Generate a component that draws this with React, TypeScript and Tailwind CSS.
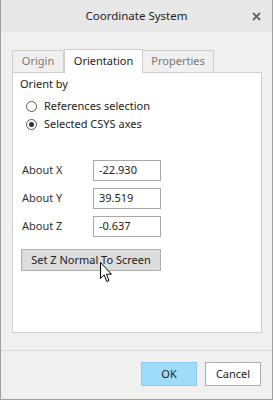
import React from 'react';

const font = { fontFamily: '"Noto Sans", "Open Sans", Arial, sans-serif' };

function Radio({ checked, label }: { checked?: boolean; label: string }) {
  return (
    <div className="flex items-center h-[18px]">
      <span className="ml-[6px] w-[11px] h-[11px] rounded-full border border-[#5a5a5a] bg-white flex items-center justify-center">
        {checked && <span className="w-[5px] h-[5px] rounded-full bg-[#333]" />}
      </span>
      <span className="ml-[7px] text-[11px] text-[#222]">{label}</span>
    </div>
  );
}

function AxisRow({ label, value }: { label: string; value: string }) {
  return (
    <div className="flex items-center h-[21px]">
      <span className="w-[71px] text-[11px] text-[#333]">{label}</span>
      <div className="w-[68px] h-[21px] border border-[#a8a8a8] bg-white px-[5px] flex items-center text-[11px] text-[#222]">
        {value}
      </div>
    </div>
  );
}

export default function App() {
  return (
    <div
      style={font}
      className="relative w-[273px] h-[400px] bg-[#f0f0f0] border-x border-b border-[#a0a0a0] flex flex-col overflow-hidden"
    >
      <div className="h-[32px] shrink-0 bg-[#e8e8e8] flex items-center justify-center relative">
        <span className="text-[11.5px] text-[#222]">Coordinate System</span>
        <svg className="absolute right-[11px] top-[12px]" width="9" height="9" viewBox="0 0 9 9">
          <path d="M1 1 L8 8 M8 1 L1 8" stroke="#666" strokeWidth="1.8" />
        </svg>
      </div>

      <div className="pl-[11px] pt-[17px] w-[261px]">
        <div className="flex h-[23px] items-end text-[11px]">
          <div className="h-[22px] w-[52px] border border-b-0 border-[#cfcfcf] bg-[#f0f0f0] flex items-center justify-center text-[#777]">
            Origin
          </div>
          <div className="h-[24px] w-[79px] -mb-px z-10 border border-b-0 border-[#cfcfcf] bg-white flex items-center justify-center text-[#222]">
            Orientation
          </div>
          <div className="h-[22px] w-[71px] border border-b-0 border-l-0 border-[#cfcfcf] bg-[#f0f0f0] flex items-center justify-center text-[#777]">
            Properties
          </div>
        </div>

        <div className="h-[261px] border border-[#cfcfcf] bg-white px-[7px] pt-[3px]">
          <div className="text-[11px] text-[#222] leading-[16px]">Orient by</div>
          <div className="mt-[5px] flex flex-col">
            <Radio label="References selection" />
            <Radio checked label="Selected CSYS axes" />
          </div>
          <div className="mt-[27px] ml-[2px] flex flex-col gap-[7px]">
            <AxisRow label="About X" value="-22.930" />
            <AxisRow label="About Y" value="39.519" />
            <AxisRow label="About Z" value="-0.637" />
          </div>
          <button className="mt-[12px] ml-[1px] w-[140px] h-[22px] bg-[#dcdcdc] border border-[#adadad] text-[11px] text-[#222] flex items-center justify-center">
            Set Z Normal To Screen
          </button>
        </div>
      </div>

      <div className="mt-[17px] h-px bg-[#d8d8d8]" />

      <div className="flex justify-end gap-[8px] pr-[11px] pt-[11px]">
        <button className="w-[56px] h-[24px] bg-[#9fdcfb] border border-[#8ccbf0] text-[11px] text-[#222]">
          OK
        </button>
        <button className="w-[56px] h-[24px] bg-white border border-[#adadad] text-[11px] text-[#222]">
          Cancel
        </button>
      </div>

      <svg
        className="absolute left-[99px] top-[262px]"
        width="13"
        height="21"
        viewBox="0 0 13 21"
      >
        <path
          d="M0.5 0.5 L0.5 16.5 L4.2 13 L6.8 19.5 L9 18.6 L6.5 12.2 L11.5 12.2 Z"
          fill="#fff"
          stroke="#000"
          strokeWidth="1"
          strokeLinejoin="miter"
        />
      </svg>
    </div>
  );
}
